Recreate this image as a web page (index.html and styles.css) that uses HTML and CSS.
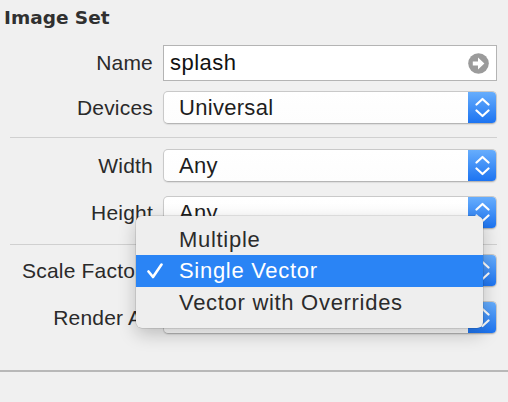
FILE: index.html
```html
<!DOCTYPE html>
<html>
<head>
<meta charset="utf-8">
<link rel="stylesheet" href="styles.css">
</head>
<body>
<div class="panel">
  <div class="title">Image Set</div>

  <div class="row row-name">
    <div class="label">Name</div>
    <div class="field">
      <span class="field-text">splash</span>
      <svg class="go" width="21" height="21" viewBox="0 0 21 21">
        <circle cx="10.5" cy="10.5" r="10.3" fill="#9b9b9b"/>
        <path d="M4.8 8.4 H10 V4.6 L16.4 10.5 L10 16.4 V12.6 H4.8 Z" fill="#fff"/>
      </svg>
    </div>
  </div>

  <div class="row row-devices">
    <div class="label">Devices</div>
    <div class="popup">
      <span class="popup-text">Universal</span>
      <span class="stepper"><svg width="15" height="21" viewBox="0 0 15 21"><path d="M1.5 7.5 L7.5 2 L13.5 7.5 M1.5 13.5 L7.5 19 L13.5 13.5" fill="none" stroke="#fff" stroke-width="2.2" stroke-linecap="round" stroke-linejoin="round"/></svg></span>
    </div>
  </div>

  <div class="sep sep1"></div>

  <div class="row row-width">
    <div class="label">Width</div>
    <div class="popup">
      <span class="popup-text">Any</span>
      <span class="stepper"><svg width="15" height="21" viewBox="0 0 15 21"><path d="M1.5 7.5 L7.5 2 L13.5 7.5 M1.5 13.5 L7.5 19 L13.5 13.5" fill="none" stroke="#fff" stroke-width="2.2" stroke-linecap="round" stroke-linejoin="round"/></svg></span>
    </div>
  </div>

  <div class="row row-height">
    <div class="label">Height</div>
    <div class="popup">
      <span class="popup-text">Any</span>
      <span class="stepper"><svg width="15" height="21" viewBox="0 0 15 21"><path d="M1.5 7.5 L7.5 2 L13.5 7.5 M1.5 13.5 L7.5 19 L13.5 13.5" fill="none" stroke="#fff" stroke-width="2.2" stroke-linecap="round" stroke-linejoin="round"/></svg></span>
    </div>
  </div>

  <div class="sep sep2"></div>

  <div class="row row-scale">
    <div class="label">Scale Factors</div>
    <div class="popup">
      <span class="popup-text"></span>
      <span class="stepper"><svg width="15" height="21" viewBox="0 0 15 21"><path d="M1.5 7.5 L7.5 2 L13.5 7.5 M1.5 13.5 L7.5 19 L13.5 13.5" fill="none" stroke="#fff" stroke-width="2.2" stroke-linecap="round" stroke-linejoin="round"/></svg></span>
    </div>
  </div>

  <div class="row row-render">
    <div class="label">Render As</div>
    <div class="popup">
      <span class="popup-text"></span>
      <span class="stepper"><svg width="15" height="21" viewBox="0 0 15 21"><path d="M1.5 7.5 L7.5 2 L13.5 7.5 M1.5 13.5 L7.5 19 L13.5 13.5" fill="none" stroke="#fff" stroke-width="2.2" stroke-linecap="round" stroke-linejoin="round"/></svg></span>
    </div>
  </div>

  <div class="bottom-line"></div>

  <div class="menu">
    <div class="menu-item">Multiple</div>
    <div class="menu-item selected">
      <svg class="check" width="16" height="16" viewBox="0 0 16 16"><path d="M1.5 8.5 L6 14 L14.5 1.5" fill="none" stroke="#fff" stroke-width="2.6" stroke-linecap="round" stroke-linejoin="round"/></svg>
      Single Vector
    </div>
    <div class="menu-item">Vector with Overrides</div>
  </div>
</div>
</body>
</html>
```

FILE: styles.css
```css
* { box-sizing: border-box; }

html, body {
  margin: 0;
  padding: 0;
  background: #f0f0f0;
}

.panel {
  position: relative;
  width: 508px;
  height: 402px;
  overflow: hidden;
  background: #f0f0f0;
  font-family: "Liberation Sans", Arial, sans-serif;
  font-size: 21px;
  color: #2a2a2a;
}

.title {
  font-family: "DejaVu Sans", sans-serif;
  font-weight: bold;
  font-size: 18.5px;
  line-height: 22px;
  color: #303030;
  padding: 7px 0 0 4px;
  height: 29px;
}

.row {
  display: flex;
  align-items: center;
  gap: 10px;
}

.label {
  width: 153px;
  flex: none;
  text-align: right;
  white-space: nowrap;
  color: #2a2a2a;
  letter-spacing: 0.2px;
}

.row-name { margin-top: 16px; }
.row-devices { margin-top: 10px; }
.row-width { margin-top: 10px; }
.row-height { margin-top: 14px; }
.row-scale { margin-top: 9px; }
.row-render { margin-top: 14px; }

.field {
  width: 334px;
  height: 36px;
  background: #fff;
  border: 1px solid #b4b4b4;
  display: flex;
  align-items: center;
  padding: 0 7px 0 6px;
}

.field-text {
  flex: 1;
  font-size: 22px;
  color: #111;
  letter-spacing: 0.5px;
}

.go { display: block; flex: none; }

.popup {
  width: 334px;
  height: 33px;
  background: linear-gradient(#ffffff, #fdfdfd);
  border: 1px solid #c9c9c9;
  border-bottom-color: #b5b5b5;
  border-radius: 5px;
  box-shadow: 0 1px 1px rgba(0,0,0,0.08);
  display: flex;
  align-items: center;
  padding-left: 15px;
  position: relative;
  overflow: hidden;
}

.popup-text {
  flex: 1;
  font-size: 22px;
  color: #1e1e1e;
  letter-spacing: 0.3px;
}

.stepper {
  width: 29px;
  flex: none;
  align-self: stretch;
  margin: -1px -1px -1px 0;
  background: linear-gradient(#69affd, #1a72f1);
  border-radius: 0 5px 5px 0;
  display: flex;
  align-items: center;
  justify-content: center;
}

.stepper svg { display: block; }

.sep {
  height: 1px;
  background: #d0d0d0;
  margin-left: 10px;
  width: 487px;
}

.sep1 { margin-top: 13px; margin-bottom: 11px; }
.sep2 { margin-top: 15px; }

.bottom-line {
  margin-top: 36px;
  height: 2px;
  background: #b8b8b8;
  width: 508px;
}

.menu {
  position: absolute;
  left: 136px;
  top: 216px;
  width: 347px;
  height: 112px;
  background: #eeeeee;
  border-radius: 6px;
  box-shadow: 0 0 0 0.5px rgba(0,0,0,0.18), 0 6px 18px rgba(0,0,0,0.22);
  padding-top: 8px;
  overflow: hidden;
  font-size: 22px;
  letter-spacing: 0.7px;
}

.menu-item {
  height: 31px;
  display: flex;
  align-items: center;
  padding-left: 43px;
  color: #2b2b2b;
  white-space: nowrap;
  position: relative;
}

.menu-item.selected {
  height: 32px;
  background: #2a84f5;
  color: #fff;
}

.check {
  position: absolute;
  left: 11px;
  top: 8px;
}
```
